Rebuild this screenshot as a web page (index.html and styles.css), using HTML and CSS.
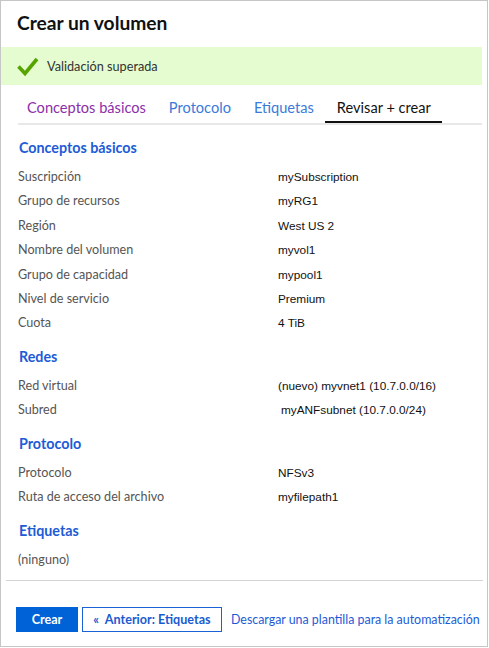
FILE: index.html
```html
<!DOCTYPE html>
<html lang="es">
<head>
<meta charset="utf-8">
<title>Crear un volumen</title>
<link rel="stylesheet" href="styles.css">
</head>
<body>
<div class="frame">
  <h1 class="title">Crear un volumen</h1>
  <div class="banner">
    <svg class="check" width="22" height="20" viewBox="0 0 22 20" aria-hidden="true"><path d="M1.5 9.5 L8 16.5 L20 2" fill="none" stroke="#57a300" stroke-width="3.6" stroke-linecap="butt" stroke-linejoin="miter"/></svg>
    <span class="banner-text">Validación superada</span>
  </div>
  <nav class="tabs">
    <a class="tab visited">Conceptos básicos</a>
    <a class="tab">Protocolo</a>
    <a class="tab">Etiquetas</a>
    <a class="tab active">Revisar + crear</a>
  </nav>
  <div class="content">
    <section class="section">
      <h2 class="heading">Conceptos básicos</h2>
      <dl class="rows">
        <div class="row"><dt>Suscripción</dt><dd>mySubscription</dd></div>
        <div class="row"><dt>Grupo de recursos</dt><dd>myRG1</dd></div>
        <div class="row"><dt>Región</dt><dd>West US 2</dd></div>
        <div class="row"><dt>Nombre del volumen</dt><dd>myvol1</dd></div>
        <div class="row"><dt>Grupo de capacidad</dt><dd>mypool1</dd></div>
        <div class="row"><dt>Nivel de servicio</dt><dd>Premium</dd></div>
        <div class="row"><dt>Cuota</dt><dd>4 TiB</dd></div>
      </dl>
    </section>
    <section class="section">
      <h2 class="heading">Redes</h2>
      <dl class="rows">
        <div class="row"><dt>Red virtual</dt><dd>(nuevo) myvnet1 (10.7.0.0/16)</dd></div>
        <div class="row"><dt>Subred</dt><dd class="indent">myANFsubnet (10.7.0.0/24)</dd></div>
      </dl>
    </section>
    <section class="section">
      <h2 class="heading">Protocolo</h2>
      <dl class="rows">
        <div class="row"><dt>Protocolo</dt><dd>NFSv3</dd></div>
        <div class="row"><dt>Ruta de acceso del archivo</dt><dd>myfilepath1</dd></div>
      </dl>
    </section>
    <section class="section">
      <h2 class="heading">Etiquetas</h2>
      <dl class="rows">
        <div class="row"><dt>(ninguno)</dt></div>
      </dl>
    </section>
  </div>
  <div class="divider"></div>
  <div class="footer">
    <button class="btn primary">Crear</button>
    <button class="btn secondary">«&nbsp; Anterior: Etiquetas</button>
    <a class="link">Descargar una plantilla para la automatización</a>
  </div>
</div>
</body>
</html>
```

FILE: styles.css
```css
* { box-sizing: border-box; }
html, body { margin: 0; padding: 0; background: #ffffff; }
body { font-family: Lato, "Open Sans", sans-serif; color: #222; }

.frame {
  width: 488px;
  height: 647px;
  border: 1px solid #c6c6c6;
  display: flex;
  flex-direction: column;
  overflow: hidden;
}

.title {
  margin: 9px 0 11px 16px;
  font-size: 19.2px;
  line-height: 26px;
  font-weight: 700;
  color: #111;
}

.banner {
  height: 38px;
  margin-right: 5px;
  background: #e4fccf;
  display: flex;
  align-items: center;
  padding-left: 16px;
}
.check { display: block; margin-top: 1px; }
.banner-text {
  margin-left: 8px;
  font-size: 12.7px;
  color: #333;
}

.tabs {
  display: flex;
  margin: 13px 5px 0 17px;
  border-bottom: 2px solid #e8e8e8;
}
.tab {
  padding: 0 11.5px 3px;
  font-size: 14.6px;
  line-height: 20px;
  color: #3a7bd9;
  border-bottom: 2px solid transparent;
  white-space: nowrap;
}
.tab:first-child { margin-left: -2.5px; }
.tab.visited { color: #8b2fa8; }
.tab.active { color: #111; border-bottom-color: #111; }

.content {
  padding: 12.5px 0 0 17px;
}
.section + .section { margin-top: 11px; }
.heading {
  margin: 0 0 7.3px 1px;
  font-size: 14.3px;
  line-height: 20px;
  font-weight: 700;
  color: #1d5bd6;
}
.rows { margin: 0; }
.row {
  display: grid;
  grid-template-columns: 261px 1fr;
  height: 24.4px;
  align-items: center;
}
.row dt {
  font-size: 12.6px;
  color: #555;
  line-height: 18px;
}
.row dd {
  margin: 0 0 0 -1px;
  font-family: "Liberation Sans", Arial, sans-serif;
  font-size: 11.8px;
  color: #111;
}
.row dd.indent { padding-left: 3px; }

.divider {
  margin: 8px 4px 0 5px;
  height: 1px;
  background: #d4d4d4;
}

.footer {
  display: flex;
  align-items: center;
  margin: 26px 0 0 15px;
  white-space: nowrap;
}
.btn {
  flex-shrink: 0;
  height: 25px;
  font-family: Lato, "Open Sans", sans-serif;
  font-size: 12.6px;
  font-weight: 700;
  padding: 0;
  cursor: pointer;
}
.primary {
  width: 62px;
  background: #0062d7;
  border: 1px solid #0062d7;
  color: #fff;
}
.secondary {
  width: 140px;
  margin-left: 4px;
  background: #fff;
  border: 1px solid #1a62d6;
  color: #1a5bd0;
}
.link {
  margin-left: 9px;
  font-size: 12.4px;
  color: #1d5bd6;
}
```
